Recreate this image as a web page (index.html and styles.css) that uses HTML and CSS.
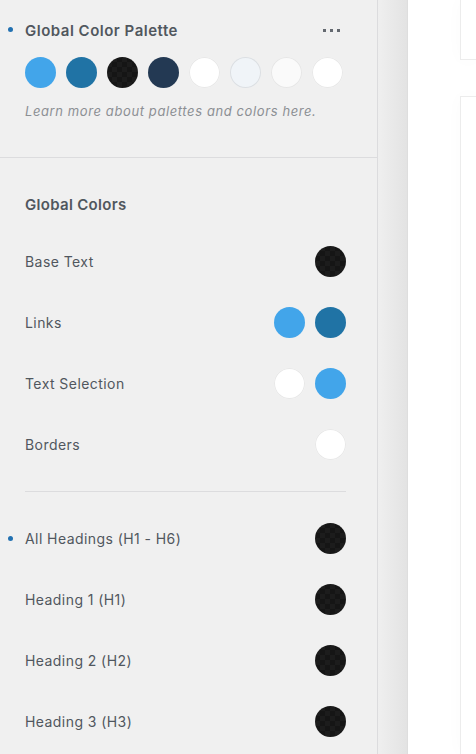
FILE: index.html
```html
<!DOCTYPE html>
<html>
<head>
<meta charset="utf-8">
<link rel="stylesheet" href="styles.css">
</head>
<body>
<div class="app">
  <aside class="panel">
    <section class="palette">
      <div class="head">
        <span class="dot"></span>
        <h2 class="title">Global Color Palette</h2>
        <span class="more"><i></i><i></i><i></i></span>
      </div>
      <div class="swatches">
        <span class="sw c-blue"></span>
        <span class="sw c-dblue"></span>
        <span class="sw c-black"></span>
        <span class="sw c-navy"></span>
        <span class="sw c-white"></span>
        <span class="sw c-ice"></span>
        <span class="sw c-off"></span>
        <span class="sw c-white"></span>
      </div>
      <p class="note">Learn more about palettes and colors here.</p>
    </section>
    <section class="globals">
      <h3 class="sub">Global Colors</h3>
      <div class="row"><span class="label">Base Text</span><span class="pair"><span class="sw c-black"></span></span></div>
      <div class="row"><span class="label">Links</span><span class="pair"><span class="sw c-blue"></span><span class="sw c-dblue"></span></span></div>
      <div class="row"><span class="label">Text Selection</span><span class="pair"><span class="sw c-white"></span><span class="sw c-blue"></span></span></div>
      <div class="row"><span class="label">Borders</span><span class="pair"><span class="sw c-white"></span></span></div>
      <hr class="sep">
      <div class="row"><span class="dot"></span><span class="label">All Headings (H1 - H6)</span><span class="pair"><span class="sw c-black"></span></span></div>
      <div class="row"><span class="label">Heading 1 (H1)</span><span class="pair"><span class="sw c-black"></span></span></div>
      <div class="row"><span class="label">Heading 2 (H2)</span><span class="pair"><span class="sw c-black"></span></span></div>
      <div class="row"><span class="label">Heading 3 (H3)</span><span class="pair"><span class="sw c-black"></span></span></div>
    </section>
  </aside>
  <div class="strip"></div>
  <main class="canvas">
    <div class="box box-top"></div>
    <div class="box box-main"></div>
  </main>
</div>
</body>
</html>
```
FILE: styles.css
```css
* { box-sizing: border-box; }
html, body { margin: 0; padding: 0; height: 100%; overflow: hidden; }
body {
  background: #fff;
  font-family: Inter, "Liberation Sans", Arial, sans-serif;
  color: #50575e;
}
.app { display: flex; height: 754px; overflow: hidden; }
.panel {
  width: 378px;
  flex: none;
  background: #f0f0f0;
  border-right: 1px solid #dcdcde;
  height: 100%;
  overflow: hidden;
}
.palette {
  padding: 18px 31px 37px 25px;
  border-bottom: 1px solid #dcdcde;
}
.head {
  position: relative;
  display: flex;
  align-items: center;
  height: 24px;
}
.dot {
  position: absolute;
  left: -17px;
  top: 50%;
  width: 5px;
  height: 5px;
  margin-top: -3px;
  border-radius: 50%;
  background: #2271b1;
}
.title {
  margin: 0;
  font-size: 15px;
  font-weight: 600;
  letter-spacing: 0.5px;
  color: #50575e;
  flex: 1;
}
.more { display: flex; gap: 4px; margin-right: 6px; }
.more i { width: 3px; height: 3px; background: #646970; display: block; }
.swatches {
  display: flex;
  gap: 10px;
  margin-top: 15px;
}
.sw {
  display: block;
  width: 31px;
  height: 31px;
  border-radius: 50%;
  flex: none;
}
.c-blue { background: #42a5ea; }
.c-dblue { background: #2073a5; }
.c-black {
  background: repeating-conic-gradient(#1c1c1c 0 25%, #151515 0 50%) 0 0 / 10px 10px;
}
.c-navy { background: #233953; }
.c-white { background: #fff; box-shadow: inset 0 0 0 1px #e8e8e8; }
.c-ice { background: #f0f4f8; box-shadow: inset 0 0 0 1px #dcdfe2; }
.c-off { background: #fafafa; box-shadow: inset 0 0 0 1px #e6e6e6; }
.note {
  margin: 14px 0 0;
  font-size: 13px;
  line-height: 18px;
  font-style: italic;
  letter-spacing: 0.6px;
  color: #8c8f94;
}
.globals {
  padding: 37px 31px 0 25px;
}
.sub {
  margin: 0 0 16px;
  font-size: 15px;
  line-height: 20px;
  font-weight: 600;
  letter-spacing: 0.3px;
  color: #50575e;
}
.row {
  position: relative;
  display: flex;
  align-items: center;
  justify-content: space-between;
  height: 61px;
}
.label { font-size: 14px; letter-spacing: 0.43px; color: #50575e; }
.pair { display: flex; gap: 10px; }
.sep {
  margin: 16px 0;
  border: 0;
  border-top: 1px solid #dcdcde;
  height: 0;
}
.strip {
  width: 30px;
  flex: none;
  background: linear-gradient(to right, #efefef, #e3e3e3);
  border-right: 1px solid #dedede;
}
.canvas {
  flex: 1;
  background: #fff;
  padding-left: 52px;
  display: flex;
  flex-direction: column;
}
.box {
  border: 1px solid #ececec;
  border-right: 0;
  box-shadow: 0 0 18px rgba(0,0,0,0.025);
}
.box-top { height: 61px; margin-top: -1px; flex: none; }
.box-main { margin-top: 36px; flex: 1; border-bottom: 0; }
```
